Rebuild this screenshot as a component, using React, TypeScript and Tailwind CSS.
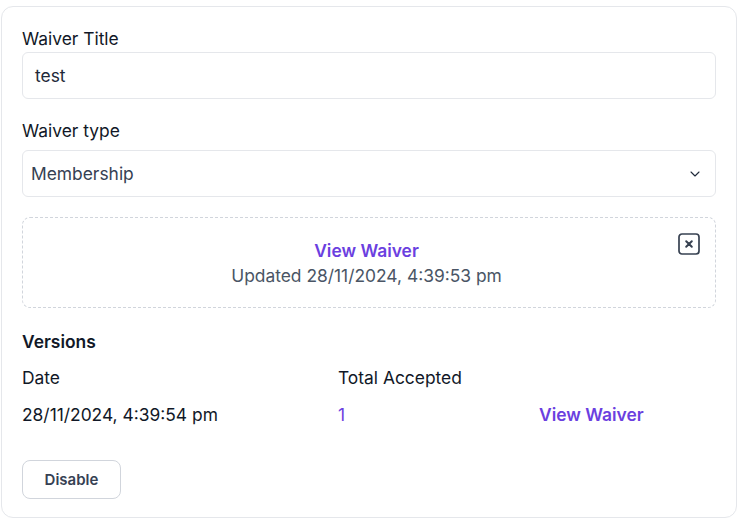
import { ChevronDown } from "lucide-react";

const font = { fontFamily: "Inter, 'Noto Sans', sans-serif" };

function CloseBox() {
  return (
    <svg width="22" height="22" viewBox="0 0 22 22" fill="none" className="text-[#374151]">
      <rect x="1" y="1" width="20" height="20" rx="3" stroke="currentColor" strokeWidth="1.7" />
      <path d="M8.2 8.2l5.6 5.6M13.8 8.2l-5.6 5.6" stroke="currentColor" strokeWidth="2" strokeLinecap="round" />
    </svg>
  );
}

export default function App() {
  return (
    <div className="min-h-screen bg-white pt-[6px] pl-px pr-[3px] pb-px" style={font}>
      <div className="border border-gray-200 rounded-xl px-5 pt-[19px] pb-[18px] text-gray-900 text-[17.4px] leading-[26px]">
        <label className="block text-[#111827]">Waiver Title</label>
        <div className="h-[47px] border border-gray-200 rounded-md px-3 flex items-center text-gray-800">
          test
        </div>

        <label className="block mt-[19px] mb-[6px] text-[#111827]">Waiver type</label>
        <div className="h-[47px] border border-gray-200 rounded-md pl-2 pr-3 flex items-center justify-between text-gray-700">
          <span>Membership</span>
          <ChevronDown size={16} strokeWidth={1.6} className="text-gray-800" />
        </div>

        <div className="relative mt-5 h-[91px] border border-dashed border-gray-300 rounded-lg flex flex-col items-center pt-5 pr-[5px] leading-[25px]">
          <a className="font-semibold text-[#6b3fe0] cursor-pointer">View Waiver</a>
          <p className="text-gray-600">Updated 28/11/2024, 4:39:53 pm</p>
          <button className="absolute top-[15px] right-[15px]">
            <CloseBox />
          </button>
        </div>

        <h3 className="mt-[21px] font-semibold text-[#111827]">Versions</h3>
        <div className="grid grid-cols-[316px_201px_1fr] text-[#111827]">
          <div className="pt-[10px]">Date</div>
          <div className="pt-[10px]">Total Accepted</div>
          <div className="pt-[10px]"></div>
          <div className="pt-[11px]">28/11/2024, 4:39:54 pm</div>
          <div className="pt-[11px] text-[#6b3fe0]">1</div>
          <div className="pt-[11px] font-semibold text-[#6b3fe0]">View Waiver</div>
        </div>

        <button className="mt-[32px] h-[39px] w-[99px] border border-gray-300 rounded-lg text-[15px] leading-5 font-semibold text-gray-700">
          Disable
        </button>
      </div>
    </div>
  );
}
